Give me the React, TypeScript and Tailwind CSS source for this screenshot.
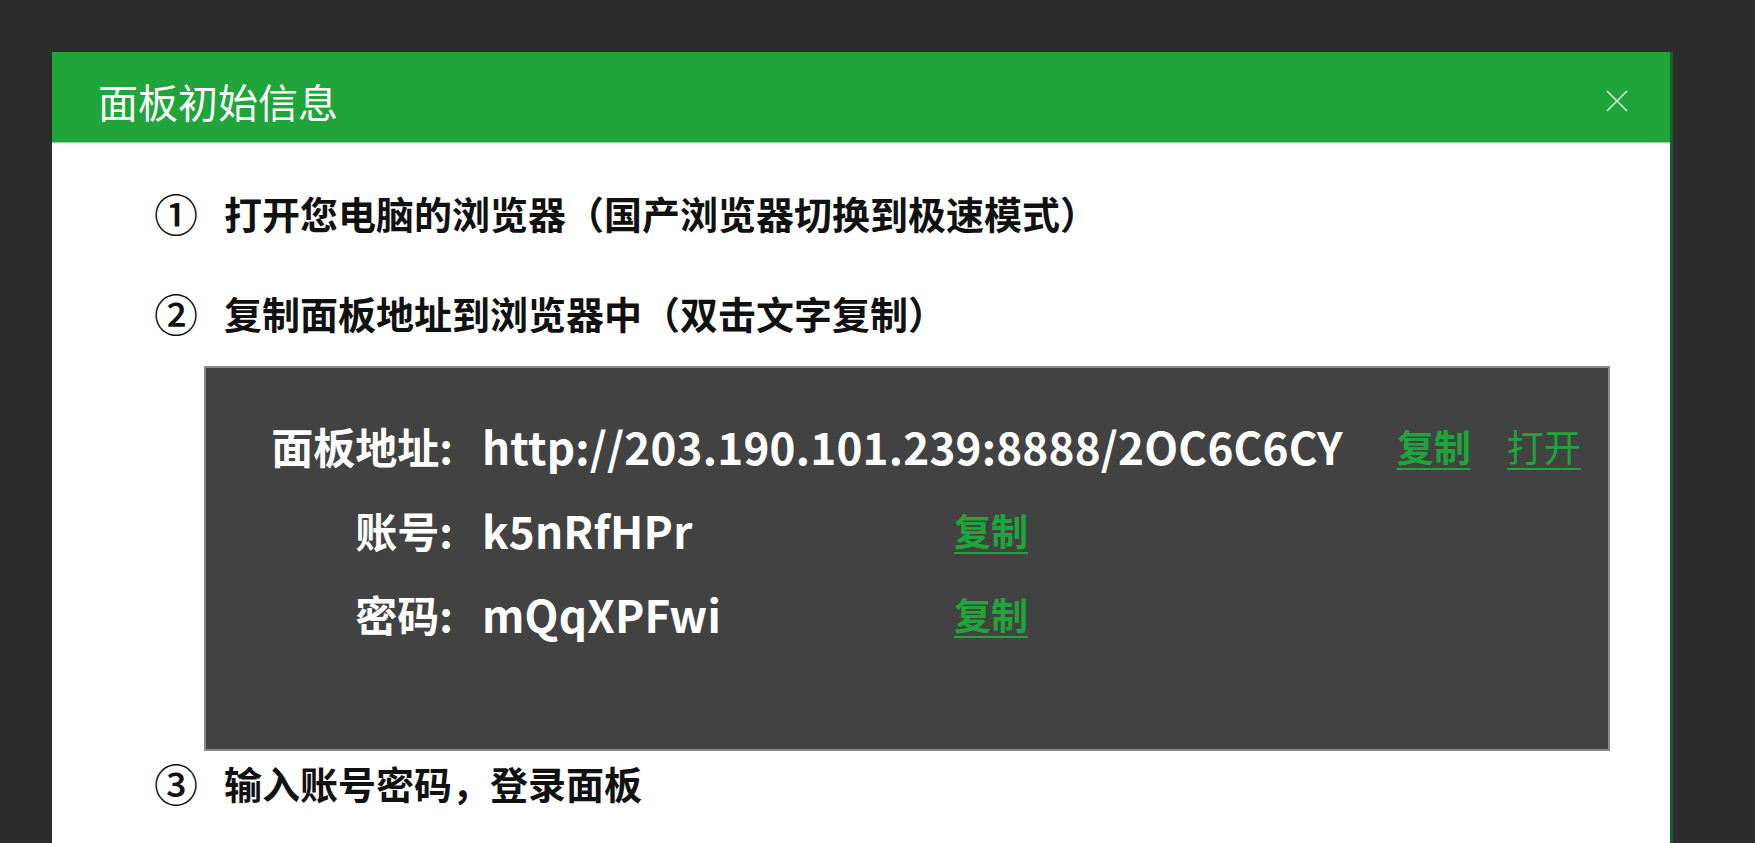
const GREEN = 'text-[#20a53a]';

function CopyLink({ label = '复制', bold = true }: { label?: string; bold?: boolean }) {
  return (
    <a
      href="#"
      className={`${GREEN} text-[37px] leading-none whitespace-nowrap underline underline-offset-[6px] decoration-2 ${bold ? 'font-bold' : 'font-normal'}`}
    >
      {label}
    </a>
  );
}

interface InfoRowProps {
  label: string;
  value: string;
  children?: React.ReactNode;
}

function InfoRow({ label, value, children }: InfoRowProps) {
  return (
    <div className="flex items-center h-[84px] whitespace-nowrap">
      <span className="w-[182px] text-right text-[42px] font-bold text-white leading-none shrink-0">{label}</span>
      <span className="ml-[29px] min-w-[418px] text-[44px] font-bold text-white leading-none tracking-[0.2px]">{value}</span>
      <div className="ml-[54px] flex items-center gap-[36px]">{children}</div>
    </div>
  );
}

function CloseIcon() {
  return (
    <svg width="24" height="24" viewBox="0 0 24 24" className="text-[#d6f2dc]">
      <path d="M2 2 L22 22 M22 2 L2 22" stroke="currentColor" strokeWidth="1.6" fill="none" />
    </svg>
  );
}

function Step({ num, children, className = '' }: { num: string; children: React.ReactNode; className?: string }) {
  return (
    <p className={`h-[50px] flex items-center text-[38px] font-bold text-[#111] leading-none whitespace-nowrap ${className}`}>
      <span className="w-[44px] mr-[26px] text-[44px] font-medium">{num}</span>
      {children}
    </p>
  );
}

export default function App() {
  return (
    <div
      className="h-[843px] overflow-hidden bg-[#2c2c2c] flex flex-col pt-[52px] pl-[52px]"
      style={{ fontFamily: '"Noto Sans CJK SC", "Noto Sans", sans-serif' }}
    >
      <div className="w-[1621px] flex-1 bg-white border-r-[3px] border-[#17612b] flex flex-col">
        <div className="h-[91px] bg-[#20a53a] border-b border-[#8ad39a] flex items-center justify-between pl-[46px] pr-[41px] pt-[8px] shrink-0">
          <h1 className="text-[40px] text-white font-normal leading-none">面板初始信息</h1>
          <CloseIcon />
        </div>

        <div className="pl-[102px] pr-[60px] pt-[45px]">
          <Step num="①">打开您电脑的浏览器（国产浏览器切换到极速模式）</Step>
          <Step num="②" className="mt-[50px]">
            复制面板地址到浏览器中（双击文字复制）
          </Step>

          <div className="mt-[28px] ml-[50px] h-[385px] bg-[#424242] border-2 border-[#8a8a8a] pl-[65px] pt-[36px]">
            <InfoRow label="面板地址:" value="http://203.190.101.239:8888/2OC6C6CY">
              <CopyLink />
              <CopyLink label="打开" bold={false} />
            </InfoRow>
            <InfoRow label="账号:" value="k5nRfHPr">
              <CopyLink />
            </InfoRow>
            <InfoRow label="密码:" value="mQqXPFwi">
              <CopyLink />
            </InfoRow>
          </div>

          <Step num="③" className="mt-[7px]">
            输入账号密码，登录面板
          </Step>
        </div>
      </div>
    </div>
  );
}
